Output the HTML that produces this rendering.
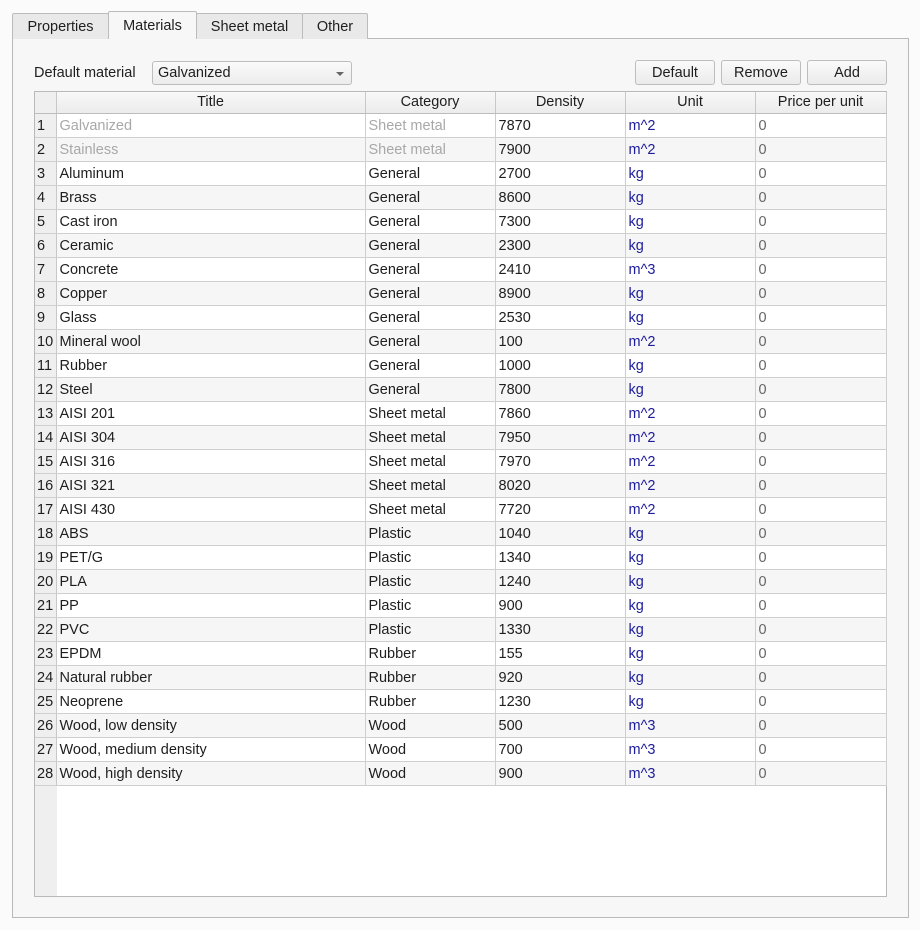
<!DOCTYPE html>
<html><head><meta charset="utf-8"><style>
*{box-sizing:border-box;margin:0;padding:0}
body{width:920px;height:930px;background:#fbfbfb;font-family:"Liberation Sans","DejaVu Sans",sans-serif;font-size:14px;color:#1e1e1e;position:relative;overflow:hidden}
.panel{position:absolute;left:12px;top:38px;width:897px;height:880px;background:#f7f7f7;border:1px solid #b9b9b9}
.tab{position:absolute;top:13px;height:26px;background:#e9e9e9;border:1px solid #bcbcbc;border-bottom:none;border-radius:2px 2px 0 0;text-align:center;line-height:26px;font-size:14.5px}
.tab.sel{top:11px;height:28px;background:#f7f7f7;line-height:28px;z-index:2}
.lbl{position:absolute;left:34px;top:65px;font-size:14.5px}
.combo{position:absolute;left:152px;top:61px;width:200px;height:24px;border:1px solid #bdbdbd;border-radius:3px;background:linear-gradient(#fafafa,#ececec);padding-left:5px;line-height:23px;font-size:14.5px}
.combo:after{content:"";position:absolute;right:7px;top:10px;border-left:4px solid transparent;border-right:4px solid transparent;border-top:4px solid #666}
.btn{position:absolute;top:60px;width:80px;height:25px;border:1px solid #bdbdbd;border-radius:3px;background:linear-gradient(#fafafa,#ebebeb);text-align:center;line-height:25px;font-size:14.5px}
.tbl{position:absolute;left:34px;top:91px;width:853px;height:806px;border:1px solid #b9b9b9;background:#fff}
.rn{position:absolute;left:0;top:0;width:22px;height:804px;background:#efefef}
table{position:absolute;left:0;top:0;border-collapse:collapse;table-layout:fixed;width:851px}
td,th{height:24px;border-right:1px solid #cfcfcf;border-bottom:1px solid #cfcfcf;padding:1px 3px 0;white-space:nowrap;overflow:hidden;font-weight:normal;text-align:left;font-size:14.5px}
th{height:21px;padding-top:0;background:linear-gradient(#f8f8f8,#ececec);text-align:center;border-bottom:1px solid #bdbdbd;border-right:1px solid #c8c8c8}
td.n{background:#efefef;padding:1px 2px 0;border-right:1px solid #c8c8c8}
tr:nth-child(even) td{background:#f6f6f6}
tr td.n{background:#efefef!important}
.g{color:#a8a8a8}
.u{color:#1c1c9c}
.p{color:#666}
</style></head><body>
<div class="panel"></div>
<div class="tab" style="left:12px;width:97px">Properties</div>
<div class="tab sel" style="left:108px;width:89px">Materials</div>
<div class="tab" style="left:196px;width:107px">Sheet metal</div>
<div class="tab" style="left:302px;width:66px">Other</div>
<div class="lbl">Default material</div>
<div class="combo">Galvanized</div>
<div class="btn" style="left:635px">Default</div>
<div class="btn" style="left:721px">Remove</div>
<div class="btn" style="left:807px">Add</div>
<div class="tbl"><div class="rn"></div>
<table>
<colgroup><col style="width:21px"><col style="width:309px"><col style="width:130px"><col style="width:130px"><col style="width:130px"><col style="width:131px"></colgroup>
<thead><tr><th style="background:#efefef"></th><th>Title</th><th>Category</th><th>Density</th><th>Unit</th><th>Price per unit</th></tr></thead>
<tbody>
<tr><td class="n">1</td><td class="g">Galvanized</td><td class="g">Sheet metal</td><td>7870</td><td class="u">m^2</td><td class="p">0</td></tr>
<tr><td class="n">2</td><td class="g">Stainless</td><td class="g">Sheet metal</td><td>7900</td><td class="u">m^2</td><td class="p">0</td></tr>
<tr><td class="n">3</td><td>Aluminum</td><td>General</td><td>2700</td><td class="u">kg</td><td class="p">0</td></tr>
<tr><td class="n">4</td><td>Brass</td><td>General</td><td>8600</td><td class="u">kg</td><td class="p">0</td></tr>
<tr><td class="n">5</td><td>Cast iron</td><td>General</td><td>7300</td><td class="u">kg</td><td class="p">0</td></tr>
<tr><td class="n">6</td><td>Ceramic</td><td>General</td><td>2300</td><td class="u">kg</td><td class="p">0</td></tr>
<tr><td class="n">7</td><td>Concrete</td><td>General</td><td>2410</td><td class="u">m^3</td><td class="p">0</td></tr>
<tr><td class="n">8</td><td>Copper</td><td>General</td><td>8900</td><td class="u">kg</td><td class="p">0</td></tr>
<tr><td class="n">9</td><td>Glass</td><td>General</td><td>2530</td><td class="u">kg</td><td class="p">0</td></tr>
<tr><td class="n">10</td><td>Mineral wool</td><td>General</td><td>100</td><td class="u">m^2</td><td class="p">0</td></tr>
<tr><td class="n">11</td><td>Rubber</td><td>General</td><td>1000</td><td class="u">kg</td><td class="p">0</td></tr>
<tr><td class="n">12</td><td>Steel</td><td>General</td><td>7800</td><td class="u">kg</td><td class="p">0</td></tr>
<tr><td class="n">13</td><td>AISI 201</td><td>Sheet metal</td><td>7860</td><td class="u">m^2</td><td class="p">0</td></tr>
<tr><td class="n">14</td><td>AISI 304</td><td>Sheet metal</td><td>7950</td><td class="u">m^2</td><td class="p">0</td></tr>
<tr><td class="n">15</td><td>AISI 316</td><td>Sheet metal</td><td>7970</td><td class="u">m^2</td><td class="p">0</td></tr>
<tr><td class="n">16</td><td>AISI 321</td><td>Sheet metal</td><td>8020</td><td class="u">m^2</td><td class="p">0</td></tr>
<tr><td class="n">17</td><td>AISI 430</td><td>Sheet metal</td><td>7720</td><td class="u">m^2</td><td class="p">0</td></tr>
<tr><td class="n">18</td><td>ABS</td><td>Plastic</td><td>1040</td><td class="u">kg</td><td class="p">0</td></tr>
<tr><td class="n">19</td><td>PET/G</td><td>Plastic</td><td>1340</td><td class="u">kg</td><td class="p">0</td></tr>
<tr><td class="n">20</td><td>PLA</td><td>Plastic</td><td>1240</td><td class="u">kg</td><td class="p">0</td></tr>
<tr><td class="n">21</td><td>PP</td><td>Plastic</td><td>900</td><td class="u">kg</td><td class="p">0</td></tr>
<tr><td class="n">22</td><td>PVC</td><td>Plastic</td><td>1330</td><td class="u">kg</td><td class="p">0</td></tr>
<tr><td class="n">23</td><td>EPDM</td><td>Rubber</td><td>155</td><td class="u">kg</td><td class="p">0</td></tr>
<tr><td class="n">24</td><td>Natural rubber</td><td>Rubber</td><td>920</td><td class="u">kg</td><td class="p">0</td></tr>
<tr><td class="n">25</td><td>Neoprene</td><td>Rubber</td><td>1230</td><td class="u">kg</td><td class="p">0</td></tr>
<tr><td class="n">26</td><td>Wood, low density</td><td>Wood</td><td>500</td><td class="u">m^3</td><td class="p">0</td></tr>
<tr><td class="n">27</td><td>Wood, medium density</td><td>Wood</td><td>700</td><td class="u">m^3</td><td class="p">0</td></tr>
<tr><td class="n">28</td><td>Wood, high density</td><td>Wood</td><td>900</td><td class="u">m^3</td><td class="p">0</td></tr>
</tbody></table></div>
</body></html>
